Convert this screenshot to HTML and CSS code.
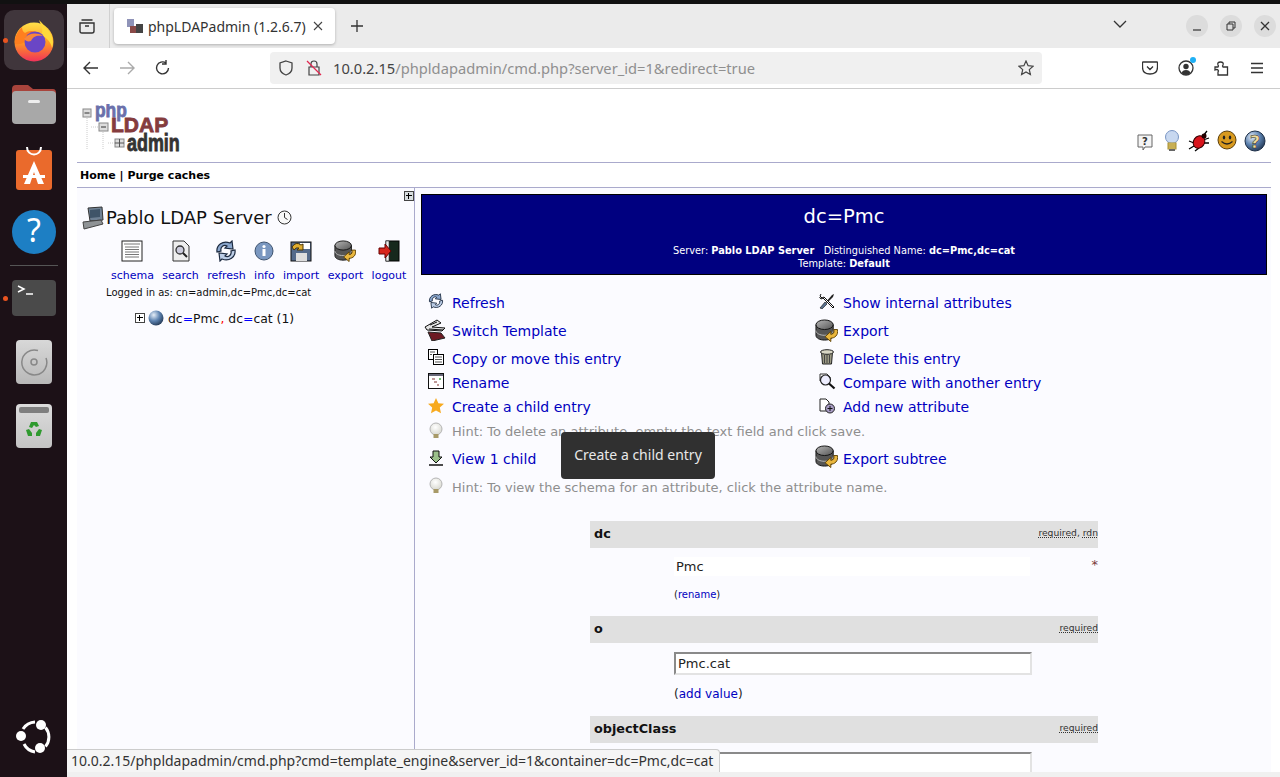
FILE: index.html
```html
<!DOCTYPE html>
<html lang="en">
<head>
	<meta charset="UTF-8">
	<meta name="viewport" content="width=device-width, initial-scale=1.0">
	<link rel="stylesheet" href="styles.css">
	<title>phpLDAPadmin (1.2.6.7)</title>
</head>
<body>
	<svg class="defs" width="0" height="0">
		<defs>
			<linearGradient id="gDb" x1="0" y1="0" x2="1" y2="1"><stop offset="0" stop-color="#b5b5b5"/><stop offset="1" stop-color="#555"/></linearGradient>
			<linearGradient id="gFlame" x1="0" y1="0" x2="0" y2="1"><stop offset="0" stop-color="#ffe14a"/><stop offset=".5" stop-color="#ff9a22"/><stop offset="1" stop-color="#f0325a"/></linearGradient>
			<radialGradient id="gGlobe" cx=".35" cy=".3" r=".8"><stop offset="0" stop-color="#e6eef8"/><stop offset=".5" stop-color="#5c82b0"/><stop offset="1" stop-color="#1d2f48"/></radialGradient>
			<radialGradient id="gBulb" cx=".45" cy=".35" r=".7"><stop offset="0" stop-color="#fff"/><stop offset="1" stop-color="#d5d5cc"/></radialGradient>
			<symbol id="i-refresh" viewBox="0 0 22 22">
				<path d="M2 12C1 5 8 0 15 3l2-2 1 8-8-1 2-2C9 4 5 7 6 11z" fill="#8aa6cc" stroke="#1c2a40" stroke-width="1.200"/>
				<path d="M20 10c1 7-6 12-13 9l-2 2-1-8 8 1-2 2c3 2 7-1 6-5z" fill="#bccde6" stroke="#1c2a40" stroke-width="1.200"/>
			</symbol>
			<symbol id="i-export" viewBox="0 0 24 24">
				<path d="M1 6v11c0 3 4 5 9 5s9-2 9-5V6z" fill="#555" stroke="#111"/>
				<path d="M1 12c0 3 4 5 9 5s9-2 9-5" fill="none" stroke="#bbb"/>
				<ellipse cx="10" cy="6" rx="9" ry="5" fill="url(#gDb)" stroke="#111"/>
				<path d="M23.500 11c1 6-3 9-7 9v3.500l-6-5 6-5.500v3c3 0 4-3 3-5z" fill="#eab73e" stroke="#5f4306"/>
			</symbol>
			<symbol id="i-bulb" viewBox="0 0 16 18">
				<circle cx="8" cy="7" r="6" fill="url(#gBulb)" stroke="#b5b5b5"/>
				<rect x="5.500" y="12" width="5" height="4" fill="#a89a68"/>
			</symbol>
		</defs>
	</svg>

	<div class="topstrip"></div>
	<div class="desk">
		<nav class="dock">
			<div class="tile tile-active">
				<span class="dot dot-ff"></span>
				<svg width="44" height="44" viewBox="0 0 44 44">
					<circle cx="22" cy="24" r="19.500" fill="url(#gFlame)"/>
					<path d="M27 2c3 3 9 9 12 14 3 6 2 12 1 14-1-6-6-11-11-13 3-4 0-10-2-15z" fill="#ffd93a"/>
					<path d="M3 26c-1-7 3-13 7-17 0 3 1 5 3 6 3-2 7-3 11-1-6 0-9 3-10 7-1 3-3 6-11 5z" fill="#ff7f1f"/>
					<circle cx="23" cy="24" r="10.500" fill="#6a46c6"/>
					<path d="M12 21c4-6 13-7 19-3-6-1-10 0-12 5-3 1-5 0-7-2z" fill="#f9873a"/>
				</svg>
			</div>
			<div class="tile">
				<svg width="46" height="42" viewBox="0 0 46 42">
					<path d="M1 6q0-4 4-4h12l5 4h20q3 0 3 4v8H1z" fill="#a8443c"/>
					<rect x="1" y="8" width="44" height="33" rx="4" fill="#a8a8a8"/>
					<rect x="17" y="17" width="12" height="3" rx="1.500" fill="#eee"/>
				</svg>
			</div>
			<div class="tile">
				<svg width="38" height="44" viewBox="0 0 38 44">
					<rect x="1" y="4" width="36" height="40" rx="3" fill="#ea6a2c"/>
					<path d="M12 1c0 10 14 10 14 0" fill="none" stroke="#fff" stroke-width="2"/>
					<path d="M19 15L9 38h6l4-12 4 12h6z" fill="#fff"/>
					<rect x="8" y="29" width="22" height="3" fill="#fff"/>
				</svg>
			</div>
			<div class="tile">
				<svg width="46" height="46" viewBox="0 0 46 46">
					<circle cx="23" cy="23" r="22" fill="#1d7fc4"/>
					<text x="23" y="33" class="dock-q">?</text>
				</svg>
			</div>
			<div class="dock-sep"></div>
			<div class="tile tile-term">
				<span class="dot dot-term"></span>
				<div class="term">
					<svg width="18" height="12" viewBox="0 0 18 12"><path d="M1 2l6 3-6 3M9 10h7" fill="none" stroke="#fff" stroke-width="1.500"/></svg>
				</div>
			</div>
			<div class="tile">
				<div class="disc">
					<svg width="28" height="28" viewBox="0 0 28 28"><path d="M18 2.500A12.500 12.500 0 1 0 26 10" fill="none" stroke="#888" stroke-width="1.500"/><circle cx="14" cy="14" r="3" fill="none" stroke="#888" stroke-width="1.500"/></svg>
				</div>
			</div>
			<div class="tile">
				<div class="bin">
					<div class="bin-lid"></div>
					<svg width="20" height="20" viewBox="0 0 20 20"><path d="M7 2h6l2 4-3 1-2-2-2 3-3-1zM2 10l3-1 3 4v3H4zM18 10l-3-1-3 4v3h4z" fill="#2f9a2f"/></svg>
				</div>
			</div>
			<div class="dock-fill"></div>
			<svg class="ubuntu" width="36" height="36" viewBox="0 0 36 36">
				<path d="M29.500 8.500A15 15 0 0 1 29.500 27.500M19 33A15 15 0 0 1 8 25M7 10A15 15 0 0 1 19 3" fill="none" stroke="#fff" stroke-width="3"/>
				<circle cx="25" cy="6" r="5" fill="#fff"/><circle cx="5" cy="17" r="5" fill="#fff"/><circle cx="24" cy="29" r="5" fill="#fff"/>
			</svg>
		</nav>

		<div class="browser">
			<div class="tabbar">
				<svg class="tb-view" width="18" height="18" viewBox="0 0 18 18"><path d="M3.500 3h11M2 6h14v8q0 2-2 2H4q-2 0-2-2zM7 9h4" fill="none" stroke="#333" stroke-width="1.400"/></svg>
				<div class="tb-sep"></div>
				<div class="tab">
					<svg width="16" height="16" viewBox="0 0 16 16"><rect x="0" y="1" width="7" height="8" fill="#8f93b8"/><rect x="3" y="8" width="7" height="7" fill="#8a4a48"/><rect x="9" y="6" width="7" height="9" fill="#444"/></svg>
					<span class="tab-title">phpLDAPadmin (1.2.6.7)</span>
					<svg width="10" height="10" viewBox="0 0 10 10"><path d="M1 1l8 8M9 1l-8 8" stroke="#444" stroke-width="1.100"/></svg>
				</div>
				<svg class="tb-plus" width="14" height="14" viewBox="0 0 14 14"><path d="M7 1v12M1 7h12" stroke="#333" stroke-width="1.300"/></svg>
				<svg class="tb-chevron" width="14" height="8" viewBox="0 0 14 8"><path d="M1 1l6 6 6-6" fill="none" stroke="#333" stroke-width="1.300"/></svg>
				<div class="winbtn"><svg width="10" height="10" viewBox="0 0 10 10"><path d="M1 9h8" stroke="#333" stroke-width="1.200"/></svg></div>
				<div class="winbtn"><svg width="10" height="10" viewBox="0 0 10 10"><path d="M1 3h6v6H1zM3 3V1h6v6H7" fill="none" stroke="#333"/></svg></div>
				<div class="winbtn"><svg width="10" height="10" viewBox="0 0 10 10"><path d="M1 1l8 8M9 1l-8 8" stroke="#333" stroke-width="1.300"/></svg></div>
			</div>
			<div class="toolbar">
				<svg width="16" height="14" viewBox="0 0 16 14"><path d="M15 7H1M7 1L1 7l6 6" fill="none" stroke="#333" stroke-width="1.400"/></svg>
				<svg class="tool-fwd" width="16" height="14" viewBox="0 0 16 14"><path d="M1 7h14M9 1l6 6-6 6" fill="none" stroke="#aaa" stroke-width="1.400"/></svg>
				<svg class="tool-reload" width="16" height="16" viewBox="0 0 16 16"><path d="M13.500 8A6 6 0 1 1 11 3M11 0v4H7" fill="none" stroke="#333" stroke-width="1.400"/></svg>
				<div class="urlbar">
					<svg width="16" height="16" viewBox="0 0 16 16"><path d="M8 1l6 2v5q0 5-6 7-6-2-6-7V3z" fill="none" stroke="#444" stroke-width="1.300"/></svg>
					<svg class="url-lock" width="16" height="16" viewBox="0 0 16 16"><path d="M5 7V4q0-3 3-3t3 3v3M3 7h10v8H3z" fill="none" stroke="#444" stroke-width="1.200"/><path d="M1 1l14 14" stroke="#e22850" stroke-width="1.300"/></svg>
					<span class="url"><span class="url-host">10.0.2.15</span>/phpldapadmin/cmd.php?server_id=1&amp;redirect=true</span>
					<svg class="url-star" width="16" height="16" viewBox="0 0 16 16"><path d="M8 1l2.100 4.700 5 .5-3.800 3.400 1.100 5L8 12l-4.400 2.600 1.100-5L.9 6.200l5-.5z" fill="none" stroke="#444" stroke-width="1.200"/></svg>
				</div>
				<svg class="tool-right" width="16" height="16" viewBox="0 0 16 16"><path d="M1 2h14q.5 0 .5.500V7q0 7-7.500 7T.5 7V2.500Q.5 2 1 2zM5 6.500L8 9.500l3-3" fill="none" stroke="#333" stroke-width="1.300"/></svg>
				<div class="account">
					<svg width="16" height="16" viewBox="0 0 16 16"><circle cx="8" cy="8" r="7" fill="none" stroke="#333" stroke-width="1.300"/><circle cx="8" cy="6.500" r="2.700" fill="#333"/><path d="M3.500 13q1-3 4.500-3t4.500 3q-2 2-4.500 2t-4.500-2z" fill="#333"/></svg>
					<span class="badge"></span>
				</div>
				<svg width="16" height="16" viewBox="0 0 16 16"><path d="M1 7h3q1-1 0-2-1-3 2.500-3T9 5q-1 1 0 2h4.500v8H4v-3q1-1 0-2-1-1-3 0z" fill="none" stroke="#333" stroke-width="1.300"/></svg>
				<svg width="14" height="12" viewBox="0 0 14 12"><path d="M1 1.500h12M1 6h12M1 10.500h12" stroke="#333" stroke-width="1.300"/></svg>
			</div>

			<div class="page">
				<header class="pla-head">
					<svg class="logo" width="102" height="48" viewBox="0 0 102 48">
						<path d="M6 14v32M22 28v18M10 23h8M27 39h7" stroke="#ccc" stroke-dasharray="1 1"/>
						<rect x="2" y="5" width="8" height="8" fill="#ddd" stroke="#888"/><path d="M3.500 9h5" stroke="#333"/>
						<rect x="18" y="19" width="9" height="8" fill="#ddd" stroke="#888"/><path d="M20 23h5" stroke="#333"/>
						<rect x="34" y="35" width="9" height="8" fill="#ddd" stroke="#888"/><path d="M38.500 35v8M34 39h9" stroke="#555"/>
						<text transform="translate(14 13) scale(.87 1)" class="logo-php">php</text>
						<text transform="translate(30 28)" class="logo-ldap">LDAP</text>
						<text transform="translate(46 46.500) scale(.78 1)" class="logo-admin">admin</text>
					</svg>
					<div class="head-icons">
						<svg class="hi-bubble" width="16" height="17" viewBox="0 0 16 17"><path d="M1 1h14v12H8l-2 3v-3H1z" fill="#f4f4f4" stroke="#666"/><text x="8" y="11" class="q-small">?</text></svg>
						<svg class="hi-bulb" width="16" height="22" viewBox="0 0 16 22"><circle cx="8" cy="7" r="6.500" fill="#c8d8f0" stroke="#7a96c4"/><rect x="4" y="13" width="8" height="6" fill="#e8cf78" stroke="#a88f30"/><path d="M4 15h8M4 17h8" stroke="#a88f30"/><rect x="5" y="19" width="6" height="2" fill="#666"/></svg>
						<svg width="22" height="22" viewBox="0 0 22 22"><path d="M1 11l5 2M1 19l5-3M7 21l4-3M14 7l4-3M15 10l6-2M15 13l6 0M19 1l-4 5" stroke="#000" stroke-width="1.300"/><ellipse cx="11" cy="12" rx="5.500" ry="6.500" fill="#d8141c" stroke="#300" transform="rotate(35 11 12)"/><circle cx="16" cy="6" r="2.500" fill="#200"/></svg>
						<svg width="20" height="22" viewBox="0 0 20 22"><circle cx="10" cy="10" r="9" fill="#d99a1e" stroke="#5c3f0a"/><ellipse cx="7" cy="7.500" rx="1.200" ry="2" fill="#222"/><ellipse cx="13" cy="7.500" rx="1.200" ry="2" fill="#222"/><path d="M4.500 11.500q5.500 5 11 0" fill="none" stroke="#222" stroke-width="1.200"/></svg>
						<svg width="22" height="22" viewBox="0 0 22 22"><circle cx="11" cy="11" r="10" fill="url(#gGlobe)" stroke="#1d2f48"/><text x="11" y="18" class="q-big">?</text></svg>
					</div>
				</header>
				<div class="pla-nav"><a href="#">Home</a> | <a href="#">Purge caches</a></div>

				<div class="pla-body">
					<aside class="tree">
						<div class="tree-toggle"><span class="plusbox"></span></div>
						<div class="server">
							<svg width="22" height="24" viewBox="0 0 22 24"><path d="M6 2l14-1 1 13-13 1z" fill="#6f8194" stroke="#333"/><path d="M8 4l10-1v8l-10 1z" fill="#3f5468"/><path d="M1 16l18-2 2 4-19 5z" fill="#8f9396" stroke="#444"/></svg>
							<span class="server-name">Pablo LDAP Server</span>
							<svg width="15" height="15" viewBox="0 0 15 15"><circle cx="7.500" cy="7.500" r="6.500" fill="#f8f8f8" stroke="#333"/><path d="M7.500 3v4.500l3 2" fill="none" stroke="#333"/></svg>
						</div>
						<div class="server-links">
							<a href="#" class="sl sl-schema"><svg width="22" height="22" viewBox="0 0 22 22"><rect x="1" y="1" width="20" height="20" fill="#fff" stroke="#222"/><path d="M3 4h16M4 7h14M4 9.500h14M4 12h14M4 14.500h14M4 17h14" stroke="#777"/></svg>schema</a>
							<a href="#" class="sl sl-search"><svg width="20" height="22" viewBox="0 0 20 22"><path d="M2 1h11l5 5v15H2z" fill="#eee" stroke="#333"/><circle cx="9" cy="10" r="4" fill="#ccd" stroke="#333" stroke-width="1.300"/><path d="M12 13l4 4" stroke="#222" stroke-width="2"/></svg>search</a>
							<a href="#" class="sl sl-refresh"><svg width="22" height="22"><use href="#i-refresh"/></svg>refresh</a>
							<a href="#" class="sl sl-info"><svg width="20" height="22" viewBox="0 0 20 22"><circle cx="10" cy="11" r="9" fill="#7a97c0" stroke="#3f5470"/><rect x="8.500" y="9" width="3" height="7" fill="#fff"/><circle cx="10" cy="6.500" r="1.600" fill="#fff"/></svg>info</a>
							<a href="#" class="sl sl-import"><svg width="22" height="22" viewBox="0 0 22 22"><rect x="1" y="2" width="20" height="19" fill="#546a8a" stroke="#111"/><rect x="6" y="13" width="11" height="8" fill="#ddd"/><rect x="10" y="3" width="10" height="6" fill="#fff"/><path d="M2 7q4-6 9-2l2-1v6H7l2-2q-3-1-5 2z" fill="#e0ad30" stroke="#4d3604"/></svg>import</a>
							<a href="#" class="sl sl-export"><svg width="22" height="22"><use href="#i-export"/></svg>export</a>
							<a href="#" class="sl sl-logout"><svg width="22" height="22" viewBox="0 0 22 22"><rect x="8" y="1" width="13" height="20" fill="#16281c" stroke="#000"/><path d="M8 1h3v20H8z" fill="#eee" stroke="#333" stroke-width=".6"/><path d="M1 8h6V4l6 7-6 7v-4H1z" fill="#d8261c" stroke="#600"/></svg>logout</a>
						</div>
						<div class="logged">Logged in as: cn=admin,dc=Pmc,dc=cat</div>
						<div class="tree-node">
							<span class="plusbox plusbox-w"></span>
							<svg width="16" height="16" viewBox="0 0 16 16"><circle cx="8" cy="8" r="7.500" fill="url(#gGlobe)"/></svg>
							<a href="#">dc<b class="eq">=</b>Pmc<b class="comma">,</b> dc<b class="eq">=</b>cat (1)</a>
						</div>
					</aside>

					<main class="entry">
						<div class="title">
							<div class="title-dn">dc=Pmc</div>
							<div class="title-sub">Server: <b>Pablo LDAP Server</b> &nbsp; Distinguished Name: <b>dc=Pmc,dc=cat</b></div>
							<div class="title-sub">Template: <b>Default</b></div>
						</div>

						<div class="actions">
							<a href="#" class="act"><svg class="ic" width="16" height="16"><use href="#i-refresh"/></svg>Refresh</a>
							<a href="#" class="act"><svg class="ic" width="16" height="16" viewBox="0 0 16 16"><path d="M1 15l5-6 2 2-5 5z" fill="#5a7390" stroke="#111" stroke-width=".6"/><path d="M7 9l6-7 2-1-1 3-6 6z" fill="#222"/><path d="M2 1L1 3l2 2 2-1 10 10-1 1L11 12 4 5 2 6 .5 4" fill="#fff" stroke="#111"/></svg>Show internal attributes</a>
							<a href="#" class="act act-big"><svg class="ic" width="22" height="22" viewBox="0 0 22 22"><path d="M1 8l12-7 4 3-9 4 13 1-3 3-15-1z" fill="#e4e4e4" stroke="#111"/><path d="M5 10l14 1M6 6l7-3" stroke="#111"/><path d="M4 13l13 1 4 5-13 3z" fill="#6d1b24" stroke="#222"/></svg>Switch Template</a>
							<a href="#" class="act act-big"><svg class="ic" width="23" height="23"><use href="#i-export"/></svg>Export</a>
							<a href="#" class="act act-third"><svg class="ic" width="16" height="16" viewBox="0 0 16 16"><rect x=".5" y=".5" width="9" height="10" fill="#fff" stroke="#000"/><rect x="5.500" y="5.500" width="10" height="10" fill="#fff" stroke="#000"/><path d="M2 3h5M2 5.500h2M7 8h7M7 10.500h7M7 13h7" stroke="#555"/></svg>Copy or move this entry</a>
							<a href="#" class="act act-third"><svg class="ic" width="16" height="16" viewBox="0 0 16 16"><path d="M2.500 3h11l-1 12h-9z" fill="#9c9a84" stroke="#222"/><ellipse cx="8" cy="3" rx="6.500" ry="2.300" fill="#d8d6c4" stroke="#222"/><path d="M5.500 6v8M8 6v8M10.500 6v8" stroke="#444"/></svg>Delete this entry</a>
							<a href="#" class="act act-up"><svg class="ic" width="16" height="16" viewBox="0 0 16 16"><rect x=".5" y=".5" width="15" height="15" fill="#fff" stroke="#111"/><rect x="1" y="1" width="14" height="2" fill="#667"/><path d="M4 6h3M6 9h3M9 12h2" stroke="#a77" stroke-width="1.500"/><path d="M11 6h2" stroke="#4a4" stroke-width="1.500"/></svg>Rename</a>
							<a href="#" class="act act-up"><svg class="ic" width="17" height="17" viewBox="0 0 17 17"><path d="M1 1h7l3 3v4H1z" fill="#fff" stroke="#333"/><circle cx="6.500" cy="7" r="5" fill="#eef" stroke="#222" stroke-width="1.200"/><path d="M10 10.500l5.500 5" stroke="#111" stroke-width="2.200"/></svg>Compare with another entry</a>
							<a href="#" class="act act-mid"><svg class="ic" width="16" height="16" viewBox="0 0 16 16"><path d="M8 0l2.400 5.200 5.600.6-4.200 3.800 1.200 5.600L8 12.400l-5 2.800 1.200-5.600L0 5.800l5.600-.6z" fill="#f7aa1f"/></svg>Create a child entry</a>
							<a href="#" class="act act-mid"><svg class="ic" width="17" height="16" viewBox="0 0 17 16"><path d="M1 1h6l3 3v9H1z" fill="#fff" stroke="#222"/><circle cx="11" cy="10.500" r="4.500" fill="#a89cc4" stroke="#222"/><path d="M8.500 10.500h5M11 8v5" stroke="#111"/></svg>Add new attribute</a>
							<div class="hint hint-first"><svg class="ic" width="16" height="18"><use href="#i-bulb"/></svg>Hint: To delete an attribute, empty the text field and click save.</div>
							<a href="#" class="act act-low"><svg class="ic" width="16" height="16" viewBox="0 0 16 16"><path d="M5 1h6v6h3l-6 6-6-6h3z" fill="#9bc08a" stroke="#111"/><path d="M1 15h14" stroke="#111" stroke-width="1.500"/></svg>View 1 child</a>
							<a href="#" class="act act-big"><svg class="ic" width="23" height="23"><use href="#i-export"/></svg>Export subtree</a>
							<div class="hint"><svg class="ic" width="16" height="18"><use href="#i-bulb"/></svg>Hint: To view the schema for an attribute, click the attribute name.</div>
						</div>

						<div class="attrs">
							<div class="attr-head"><span class="attr-name">dc</span><span class="attr-notes"><u>required</u>, <u>rdn</u></span></div>
							<div class="attr-val attr-val-rdn">
								<span class="ro">Pmc</span>
								<span class="star">*</span>
								<div class="val-link val-link-small">(<a href="#">rename</a>)</div>
							</div>
							<div class="attr-head"><span class="attr-name">o</span><span class="attr-notes"><u>required</u></span></div>
							<div class="attr-val">
								<input class="val-input" type="text" value="Pmc.cat">
								<div class="val-link">(<a href="#">add value</a>)</div>
							</div>
							<div class="attr-head"><span class="attr-name">objectClass</span><span class="attr-notes"><u>required</u></span></div>
							<div class="attr-val">
								<input class="val-input" type="text">
							</div>
						</div>
					</main>
				</div>

				<div class="tooltip">Create a child entry</div>
				<div class="status">10.0.2.15/phpldapadmin/cmd.php?cmd=template_engine&amp;server_id=1&amp;container=dc=Pmc,dc=cat</div>
			</div>
			<div class="bottomstrip"></div>
		</div>
	</div>
</body>
</html>
```

FILE: styles.css
```css
*{
	box-sizing:border-box;
}
html,body{
	margin:0;
	height:777px;
	overflow:hidden;
}
body{
	display:flex;
	flex-direction:column;
	font-family:'DejaVu Sans', sans-serif;
	background:#fff;
}
.defs{
	position:absolute;
}
a{
	color:#0000c0;
	text-decoration:none;
}
svg{
	display:block;
	flex:none;
}
.topstrip{
	height:4px;
	background:#111;
}
.desk{
	flex:1;
	display:flex;
	min-height:0;
}

/* dock */
.dock{
	width:67px;
	background:#1c1117;
	display:flex;
	flex-direction:column;
	align-items:center;
	padding:6px 3px 0 4px;
}
.tile{
	position:relative;
	width:60px;
	height:60px;
	margin-bottom:4px;
	display:flex;
	align-items:center;
	justify-content:center;
}
.tile-active{
	background:#40363c;
	border-radius:10px;
}
.dot{
	position:absolute;
	left:-1px;
	top:28px;
	width:5px;
	height:5px;
	border-radius:50%;
	background:#e95420;
}
.dock-q{
	font-family:'Noto Sans', sans-serif;
	font-size:32px;
	fill:#fff;
	text-anchor:middle;
}
.dock-sep{
	width:48px;
	height:1px;
	background:#555;
	margin:-1px 0 2px;
}
.term{
	width:44px;
	height:36px;
	background:#4a4a4a;
	border-radius:4px;
	padding:4px 5px;
}
.disc{
	width:36px;
	height:44px;
	background:linear-gradient(#d8d8d8,#b8b8b8);
	border-radius:4px;
	display:flex;
	align-items:center;
	justify-content:center;
}
.bin{
	width:36px;
	height:44px;
	background:linear-gradient(#dcdcdc,#c4c4c4);
	border-radius:4px;
	padding:3px;
	display:flex;
	flex-direction:column;
	align-items:center;
	gap:7px;
}
.bin-lid{
	width:30px;
	height:6px;
	background:#7f7f7f;
	border-radius:2px;
}
.dock-fill{
	flex:1;
}
.ubuntu{
	margin-bottom:22px;
}

/* browser chrome */
.browser{
	flex:1;
	min-width:0;
	display:flex;
	flex-direction:column;
}
.tabbar{
	height:44px;
	background:#ebebeb;
	display:flex;
	align-items:center;
	font-family:'Noto Sans', sans-serif;
}
.tb-view{
	margin-left:11px;
}
.tb-sep{
	width:1px;
	height:44px;
	background:#d0d0d0;
	margin-left:13px;
}
.tab{
	width:221px;
	height:36px;
	margin-left:4px;
	background:#fff;
	border-radius:4px;
	box-shadow:0 1px 3px rgba(0,0,0,.25);
	display:flex;
	align-items:center;
	padding:0 12px 0 13px;
	gap:5px;
}
.tab-title{
	flex:1;
	font-size:14px;
	color:#333;
	white-space:nowrap;
	overflow:hidden;
}
.tb-plus{
	margin-left:15px;
}
.tb-chevron{
	margin-left:749px;
	margin-top:-4px;
}
.winbtn{
	width:22px;
	height:22px;
	border-radius:50%;
	background:#dcdcdc;
	display:flex;
	align-items:center;
	justify-content:center;
	margin-left:12px;
}
.tb-chevron + .winbtn{
	margin-left:59px;
}
.toolbar{
	height:41px;
	background:#fff;
	border-bottom:1px solid #ccc;
	display:flex;
	align-items:center;
	padding-left:16px;
	gap:20px;
}
.urlbar{
	width:772px;
	height:32px;
	margin-left:79px;
	margin-right:-1px;
	background:#f0f0f0;
	border-radius:4px;
	display:flex;
	align-items:center;
	padding:0 8px;
	font-family:'Noto Sans', sans-serif;
	font-size:14.700px;
	color:#8f8f8f;
}
.url-lock{
	margin-left:12px;
}
.url{
	margin-left:11px;
	flex:1;
	white-space:nowrap;
}
.url-host{
	color:#444;
}
.tool-right{
	margin-left:81px;
}
.account{
	position:relative;
}
.badge{
	position:absolute;
	right:-2px;
	top:-3px;
	width:6px;
	height:6px;
	border-radius:50%;
	background:#1fb0f5;
}

/* page */
.page{
	position:relative;
	flex:1;
	min-height:0;
	overflow:hidden;
	padding:0 9px 0 10px;
	background:#fff;
}
.bottomstrip{
	height:5px;
	background:#f0f0f0;
}
.pla-head{
	height:74px;
	border-bottom:1px solid #aaaacc;
	display:flex;
	align-items:flex-end;
	justify-content:space-between;
	padding:0 5px 10px 4px;
}
.logo-php{
	font:bold 20px 'Liberation Sans', sans-serif;
	fill:#6b70ab;
	stroke:#6b70ab;
	stroke-width:.8px;
}
.logo-ldap{
	font:bold 21px 'Liberation Sans', sans-serif;
	fill:#853c3e;
	stroke:#853c3e;
	stroke-width:.8px;
}
.logo-admin{
	font:bold 23px 'Liberation Sans', sans-serif;
	fill:#333;
	stroke:#333;
	stroke-width:.8px;
}
.head-icons{
	display:flex;
	align-items:flex-end;
	gap:7px;
}
.hi-bubble{
	margin-right:4px;
	margin-bottom:1px;
}
.hi-bulb{
	margin-right:1px;
}
.q-small{
	font:bold 10px 'DejaVu Sans', sans-serif;
	text-anchor:middle;
	fill:#333;
}
.q-big{
	font:bold 18px 'DejaVu Sans', sans-serif;
	text-anchor:middle;
	fill:#f3dc9a;
	stroke:#222;
	stroke-width:.5px;
}
.pla-nav{
	height:25px;
	border-bottom:1px solid #aaaacc;
	font-size:11px;
	font-weight:bold;
	line-height:26px;
	padding-left:3px;
}
.pla-nav a{
	color:#000;
}
.pla-body{
	display:flex;
	background:#fbfbff;
	height:600px;
}

/* left tree */
.tree{
	width:338px;
	flex:none;
	border-right:1px solid #aaaacc;
	position:relative;
}
.tree-toggle{
	display:flex;
	justify-content:flex-end;
	padding:3px 0 0 0;
}
.plusbox{
	position:relative;
	display:block;
	width:10px;
	height:10px;
	background:#d8dde0;
	border:1px solid #444;
}
.plusbox:before{
	content:"";
	position:absolute;
	left:1px;
	top:3px;
	width:6px;
	height:2px;
	border-top:1px solid #000;
}
.plusbox:after{
	content:"";
	position:absolute;
	left:3px;
	top:1px;
	height:6px;
	width:1px;
	background:#000;
}
.plusbox-w{
	background:#fff;
}
.server{
	display:flex;
	align-items:center;
	padding:0 0 0 5px;
	height:33px;
}
.server-name{
	font-size:18px;
	color:#111;
	margin:0 5px 0 2px;
}
.server-links{
	display:flex;
	gap:8.300px;
	padding:6px 0 0 34px;
}
.sl{
	display:flex;
	flex-direction:column;
	align-items:center;
	gap:7px;
	font-size:11px;
}
.logged{
	font-size:10px;
	color:#111;
	padding:5px 0 0 29px;
}
.tree-node{
	display:flex;
	align-items:center;
	gap:3px;
	padding:12px 0 0 58px;
	font-size:12.400px;
}
.tree-node a{
	color:#111;
	margin-left:1px;
}
.eq{
	color:#0000ff;
	font-weight:normal;
}
.comma{
	color:#ff0000;
	font-weight:normal;
	margin-left:1px;
}

/* right side */
.entry{
	flex:1;
	min-width:0;
	padding:6px 4px 0 6px;
}
.title{
	height:81px;
	background:#000080;
	border:1px solid #000;
	color:#fff;
	text-align:center;
	padding-top:9px;
}
.title-dn{
	font-size:19.500px;
	line-height:25px;
	margin-bottom:15px;
}
.title-sub{
	font-size:9.800px;
	line-height:13px;
}
.actions{
	display:grid;
	grid-template-columns:391px 1fr;
	grid-template-rows:28px 28px 26px 24px 24px 24px 32px 24px;
	margin-top:14px;
	font-size:14px;
}
.act{
	display:flex;
	align-items:center;
	position:relative;
	padding-left:31px;
}
.act .ic{
	position:absolute;
	left:7px;
	top:4px;
}
.act-third{
	padding-top:2px;
}
.act-up .ic{
	top:2px;
}
.act-mid .ic{
	top:3px;
}
.act-low .ic{
	top:7px;
}
.act-big .ic{
	left:3px;
	top:2px;
}
.hint{
	grid-column:1 / 3;
	position:relative;
	display:flex;
	align-items:center;
	padding-left:31px;
	font-size:13px;
	color:#8e8e8e;
}
.hint .ic{
	position:absolute;
	left:7px;
	top:2px;
}
.hint-first .ic{
	top:3px;
}
.attrs{
	width:508px;
	margin:22px 0 0 169px;
}
.attr-head{
	height:27px;
	background:#e0e0e0;
	display:flex;
	align-items:center;
	justify-content:space-between;
	padding-left:4px;
}
.attr-name{
	font-size:12.800px;
	font-weight:bold;
	color:#111;
	margin-bottom:3px;
}
.attr-notes{
	font-size:9.200px;
	color:#333;
	margin-bottom:5px;
}
.attr-notes u{
	text-decoration:underline dotted #333;
}
.attr-val{
	position:relative;
	padding:9px 0 0 84px;
	height:73px;
}
.attr-val-rdn{
	height:68px;
}
.ro{
	display:block;
	width:356px;
	height:19px;
	background:#fff;
	font-size:13px;
	line-height:19px;
	padding-left:2px;
	color:#222;
}
.star{
	position:absolute;
	right:0;
	top:9px;
	font-size:13px;
	color:#7a3a3a;
}
.val-link{
	font-size:12px;
	color:#222;
	margin-top:12px;
}
.val-link-small{
	font-size:10px;
	margin-top:13px;
}
.val-input{
	display:block;
	width:358px;
	height:23px;
	border:2px solid #e3e3e3;
	border-top-color:#8a8a8a;
	border-left-color:#8a8a8a;
	background:#fff;
	font-family:'DejaVu Sans', sans-serif;
	font-size:13px;
	color:#222;
	padding:0 2px;
	outline:none;
}

/* overlays */
.tooltip{
	position:absolute;
	left:494px;
	top:343px;
	width:154px;
	height:47px;
	background:#303030;
	border-radius:4px;
	color:#e8e8e8;
	font-family:'Noto Sans', sans-serif;
	font-size:14px;
	line-height:45px;
	text-align:center;
}
.status{
	position:absolute;
	left:0;
	bottom:0;
	height:23px;
	width:653px;
	background:#f5f5f5;
	border-top:1px solid #ccc;
	border-right:1px solid #ccc;
	border-top-right-radius:4px;
	font-family:'Noto Sans', sans-serif;
	font-size:14px;
	line-height:21px;
	color:#333;
	padding-left:4px;
	white-space:nowrap;
}
```
